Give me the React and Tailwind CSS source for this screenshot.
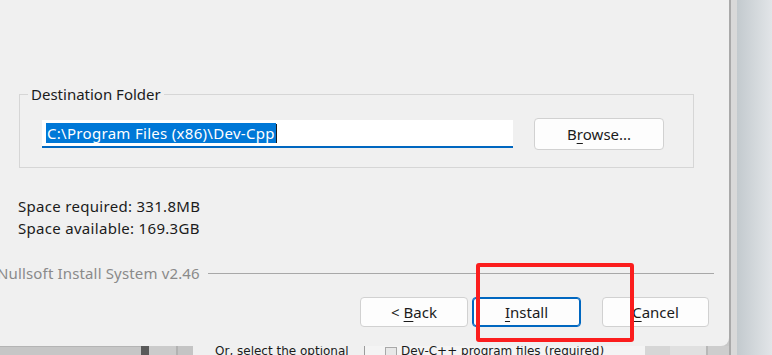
import React from "react";

function WinButton({ children, primary, className = "" }) {
  return (
    <button
      className={`h-[30px] rounded-[4px] bg-[#fdfdfd] text-[15px] text-[#1b1b1b] flex items-center justify-center ${
        primary ? "border border-[#0067c0] shadow-[inset_0_0_0_1px_#0067c0]" : "border border-[#d1d1d1]"
      } ${className}`}
    >
      {children}
    </button>
  );
}

export default function App() {
  return (
    <div className="relative w-[772px] h-[355px] overflow-hidden flex font-['Noto_Sans','Open_Sans',sans-serif] bg-[#c8c8c8]">
      <div className="w-[729px] flex flex-col">
        {/* installer dialog */}
        <div className="h-[346px] bg-[#f0f0f0] rounded-br-[8px] flex flex-col">
          <fieldset className="mt-[84px] ml-[19px] w-[675px] border border-[#d6d6d6] px-[8px] pb-[17px]">
            <legend className="px-[3px] text-[15px] leading-[20px] text-[#1b1b1b]">Destination Folder</legend>
            <div className="flex items-center pt-[14px] pl-[14px]">
              <div className="w-[471px] h-[28px] bg-white border-b-2 border-[#0067c0] flex items-center pl-[4px]">
                <span className="bg-[#0078d7] text-white text-[15px] leading-[20px] px-[1px] tracking-[0.3px]">C:\Program Files (x86)\Dev-Cpp</span>
                <span className="w-px h-[19px] bg-[#1b1b1b]" />
              </div>
              <WinButton className="ml-[21px] w-[130px] h-[32px]">
                B<span className="underline underline-offset-[3px]">r</span>owse...
              </WinButton>
            </div>
          </fieldset>

          <div className="mt-[27px] ml-[18px] text-[15px] leading-[22px] text-[#1b1b1b] tracking-[0.3px]">
            <div>Space required: 331.8MB</div>
            <div>Space available: 169.3GB</div>
          </div>

          <div className="mt-[24px] mr-[15px] flex items-center h-[20px]">
            <span className="ml-[-3px] text-[15px] leading-[20px] text-[#8a8a8a] whitespace-nowrap tracking-[0.15px]">Nullsoft Install System v2.46</span>
            <div className="ml-[8px] flex-1 h-px bg-[#a8a8a8]" />
          </div>

          <div className="mt-[14px] mr-[20px] flex justify-end">
            <WinButton className="w-[108px]">
              &lt; <span className="underline underline-offset-[3px] ml-[4px]">B</span>ack
            </WinButton>
            <WinButton primary className="ml-[4px] w-[109px]">
              <span className="underline underline-offset-[3px]">I</span>nstall
            </WinButton>
            <WinButton className="ml-[21px] w-[107px]">
              <span className="underline underline-offset-[3px]">C</span>ancel
            </WinButton>
          </div>
        </div>

        {/* window underneath */}
        <div className="h-[9px] flex overflow-hidden text-[12px] leading-[14px] text-[#1b1b1b] font-['DejaVu_Sans',sans-serif]">
          <div className="w-[141px] bg-[#c6c6c6] border-t border-[#b4b4b4]" />
          <div className="w-[8px] bg-[#5a5a5a]" />
          <div className="w-[29px] bg-[#cbcbcb] border-r-2 border-[#b2b2b2]" />
          <div className="w-[15px] bg-[#c4c4c4]" />
          <div className="w-[171px] bg-[#f0f0f0] pl-[22px] -mt-[2px] whitespace-nowrap">Or, select the optional</div>
          <div className="w-[281px] bg-[#f4f4f4] border-l border-[#9c9c9c] flex items-start -mt-[2px] pl-[20px] whitespace-nowrap">
            <span className="mt-[3px] w-[12px] h-[12px] border border-[#a8a8a8] bg-[#e8e8e8]" />
            <span className="ml-[4px]">Dev-C++ program files (required)</span>
          </div>
          <div className="w-[25px] bg-[#d6d6d6]" />
          <div className="w-[38px] bg-[#e0e0e0] border-r-2 border-[#b8b8b8]" />
          <div className="flex-1 bg-[#cdcdcd]" />
        </div>
      </div>

      {/* desktop / parent window edge */}
      <div className="flex-1 flex">
        <div className="w-[2px] bg-[#a9a9a9]" />
        <div className="w-[6px] bg-[#d9d9d9]" />
        <div className="flex-1 bg-gradient-to-r from-[#c3cace] to-[#e2e5e8]" />
      </div>

      {/* red highlight annotation */}
      <div className="absolute left-[476px] top-[263px] w-[158px] h-[79px] border-4 border-[#fb1d1d] rounded-[3px]" />
    </div>
  );
}
